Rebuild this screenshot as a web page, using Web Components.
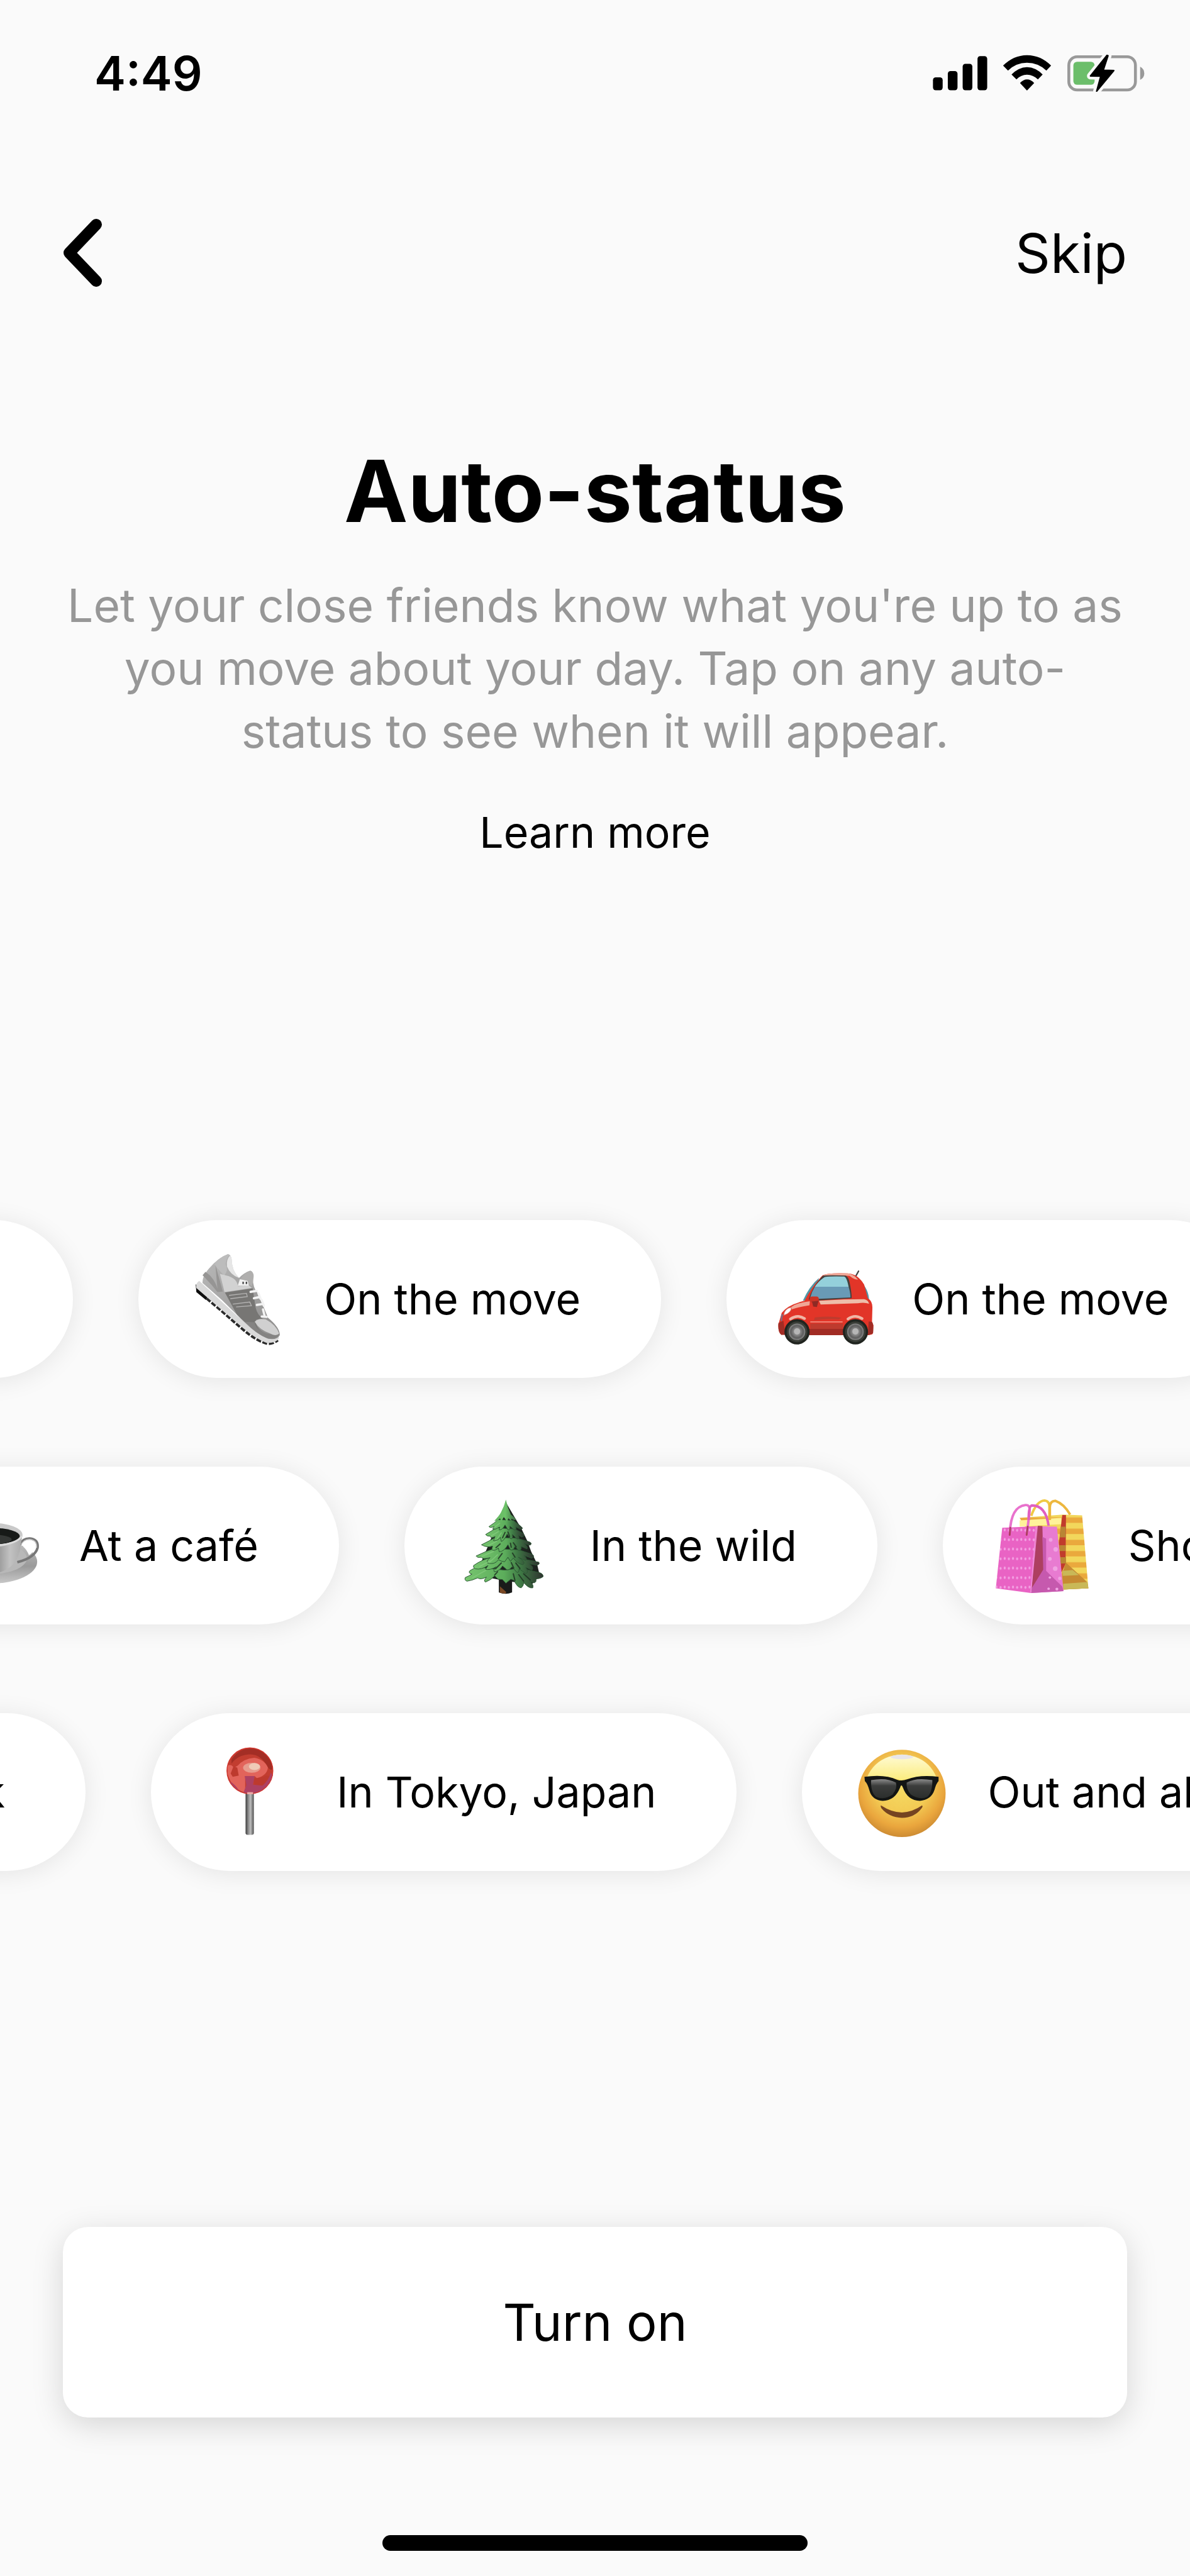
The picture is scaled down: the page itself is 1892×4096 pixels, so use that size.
<!DOCTYPE html>
<html lang="en">
<head>
<meta charset="utf-8">
<meta name="viewport" content="width=device-width, initial-scale=1">
<title>Auto-status</title>
<style>
  :root {
    --bg: #fafafa;
    --ink: #000;
    --muted: #979797;
    --side: 100px;
  }
  body {
    margin: 0;
    background: var(--bg);
    color: var(--ink);
    font-family: Inter, "Liberation Sans", sans-serif;
  }
</style>
</head>
<body>
<auto-status-screen>
  <phone-status-bar slot="status">4:49</phone-status-bar>
  <nav-bar slot="nav">Skip</nav-bar>
  <intro-text slot="intro">
    <span slot="title">Auto-status</span>
    Let your close friends know what you're up to as you move about your day. Tap on any auto-status to see when it will appear.
    <span slot="link">Learn more</span>
  </intro-text>
  <chip-row slot="rows" style="--scroll: -574px">
    <status-chip icon="cup">At home</status-chip>
    <status-chip icon="shoe">On the move</status-chip>
    <status-chip icon="car">On the move</status-chip>
  </chip-row>
  <chip-row slot="rows" style="--scroll: -169px">
    <status-chip icon="cup">At a café</status-chip>
    <status-chip icon="tree">In the wild</status-chip>
    <status-chip icon="bags">Shopping</status-chip>
  </chip-row>
  <chip-row slot="rows" style="--scroll: -533px">
    <status-chip icon="cup">At work</status-chip>
    <status-chip icon="pin">In Tokyo, Japan</status-chip>
    <status-chip icon="cool">Out and about</status-chip>
  </chip-row>
  <action-footer slot="footer">Turn on</action-footer>
</auto-status-screen>

<script>
// each icon is drawn in its own 480 unit square
const icons = {
  shoe: `
    <svg viewBox="64 108 480 480">
      <defs>
        <linearGradient id="heel" x1="0" y1="0" x2="1" y2="1">
          <stop offset="0" stop-color="#b9b9b9"/><stop offset="1" stop-color="#8c8b8a"/>
        </linearGradient>
      </defs>
      <path fill="none" stroke="#2a2a2a" stroke-width="18" stroke-dasharray="24 7" d="M112 302 Q150 342 205 386 L330 494 Q395 549 448 563 Q475 563 496 546"/>
      <path fill="#0d0d0d" d="M101 278 L104 316 L150 354 L160 338 Z"/>
      <path fill="#d9d9d9" d="M118 262 Q100 272 104 296 L205 384 L330 490 Q390 542 445 562 Q490 562 503 540 L500 515 L420 520 L300 430 Z"/>
      <path fill="url(#heel)" d="M256 133 Q210 150 165 202 Q132 240 134 272 L228 355 L330 455 Q395 520 450 541 Q492 550 507 524 Q508 488 450 440 L432 395 L398 318 Q374 290 378 240 Q380 216 364 213 Q335 222 310 248 Q274 212 274 155 Q270 134 256 133 Z"/>
      <path fill="#bcbcbc" d="M256 133 Q210 150 190 183 L238 236 Q262 212 245 180 Q250 150 265 137 Z"/>
      <path fill="#969594" d="M196 184 L232 314 L206 316 Q170 270 134 235 L148 218 Q190 246 206 300 Z"/>
      <path fill="#d2d2d2" d="M218 228 L250 236 Q300 248 305 288 L360 286 L372 296 L240 316 Z"/>
      <path fill="#777674" d="M242 318 L376 298 L390 390 Q400 432 430 448 L392 450 Q386 490 440 518 Q372 500 300 425 Z"/>
      <path fill="#848382" d="M386 462 Q390 500 448 518 L500 524 Q490 545 450 540 Q392 520 340 460 Z"/>
      <path fill="#d0d0d0" d="M386 460 Q400 440 440 448 Q490 475 504 516 Q488 532 460 516 Q410 500 386 460 Z"/>
      <path fill="#e6e6e6" d="M268 138 Q248 158 252 192 Q268 232 310 248 Q276 212 275 158 Z"/>
      <path fill="#b0afae" d="M364 213 Q335 222 318 254 L372 288 Q380 260 381 238 Q380 218 364 213 Z"/>
      <path fill="#f1f1f1" d="M314 254 L352 262 L358 286 L304 286 Z"/>
      <path stroke="#4b4b4b" stroke-width="7" d="M330 266 v11 M346 266 v11"/>
      <path fill="none" stroke="#b5b4b3" stroke-width="4" d="M262 332 L346 322 L350 338 L268 348 M280 374 L362 364 L370 382 L296 388"/>
      <path fill="none" stroke="#f3f3f3" stroke-width="11" stroke-linecap="round" d="M366 315 L396 310 M382 346 L410 340 M396 378 L424 374 M426 400 L434 432 M404 322 L414 348 M420 355 L430 382 M420 434 L444 436"/>
    </svg>`,
  car: `
    <svg viewBox="75 -12 480 480">
      <defs>
        <radialGradient id="hub"><stop offset="0" stop-color="#c9c9c9"/><stop offset=".35" stop-color="#8e8e8e"/><stop offset=".75" stop-color="#5d5d5d"/><stop offset="1" stop-color="#8a8a8a"/></radialGradient>
      </defs>
      <path stroke="#454545" stroke-width="7" stroke-linecap="round" d="M459 120 L473 95"/>
      <path fill="#4f97a8" d="M204 238 Q235 168 282 128 L250 230 Z M480 142 Q522 180 524 236 L500 220 Z"/>
      <path fill="#e23528" d="M86 352 L102 296 Q130 258 212 238 Q250 165 300 115 Q330 102 420 106 Q470 108 500 160 L518 226 Q540 240 540 270 L538 342 L545 356 L540 400 Q520 408 490 404 L100 402 Q84 390 86 352 Z"/>
      <path fill="#a12c24" d="M86 346 L110 334 L120 402 L100 403 Q82 390 86 346 Z M522 338 L538 340 Q548 352 543 396 L518 404 Z M236 374 H400 V404 H236 Z"/>
      <path fill="#be3b2e" d="M240 348 H398 V374 H240 Z M262 318 Q340 310 390 320 L378 328 Q320 325 258 332 Z"/>
      <path fill="#eebeaa" d="M282 238 L400 232 L500 230 Q520 234 524 252 Q500 244 470 250 L290 256 Z"/>
      <path fill="#f0a797" d="M148 268 Q180 246 238 240 L236 260 Q190 266 150 280 Z M300 114 Q330 102 420 106 Q452 110 470 136 Q450 136 430 118 Q380 112 312 120 Z"/>
      <path fill="none" stroke="#ee8c7e" stroke-width="6" d="M240 340 H396"/>
      <path fill="none" stroke="#f0b5a5" stroke-width="13" stroke-linecap="round" d="M144 326 Q178 302 212 324 M422 326 Q455 302 490 324"/>
      <path fill="#45403d" d="M300 118 Q310 113 410 116 Q424 120 430 150 Q440 200 440 226 L280 236 L232 232 Q250 170 300 118 Z"/>
      <path fill="#94d0db" d="M310 123 Q340 119 404 121 Q416 124 425 170 L262 170 Q280 142 310 123 Z"/>
      <path fill="#699ab6" d="M262 170 H425 Q434 200 434 222 L280 229 L240 222 Q246 196 262 170 Z"/>
      <rect x="237" y="217" width="44" height="30" rx="12" fill="#ca3426"/>
      <path fill="#8f2a24" d="M248 242 L280 238 L272 268 L254 266 Z"/>
      <path fill="#fff" stroke="#d2897e" stroke-width="3" d="M112 308 Q115 276 148 270 Q150 295 112 308 Z"/>
      <path fill="#77708a" d="M101 302 L108 305 L103 336 L96 336 Z"/>
      <circle cx="176" cy="388" r="61" fill="#20241f"/>
      <circle cx="176" cy="388" r="50" fill="#393d37"/>
      <circle cx="176" cy="388" r="40" fill="url(#hub)"/>
      <circle cx="176" cy="386" r="15" fill="#b6b6b6"/>
      <circle cx="458" cy="388" r="61" fill="#20241f"/>
      <circle cx="458" cy="388" r="50" fill="#393d37"/>
      <circle cx="458" cy="388" r="40" fill="url(#hub)"/>
      <circle cx="458" cy="386" r="15" fill="#b6b6b6"/>
    </svg>`,
  cup: `
    <svg viewBox="-273 42 480 480">
      <defs>
        <linearGradient id="china"><stop offset="0" stop-color="#eee"/><stop offset=".55" stop-color="#8c8c8c"/><stop offset=".8" stop-color="#c2c2c2"/><stop offset="1" stop-color="#aaa"/></linearGradient>
        <linearGradient id="plate" x1="0" y1="0" x2="0" y2="1"><stop offset="0" stop-color="#c4c4c4"/><stop offset=".6" stop-color="#9a9a9a"/><stop offset="1" stop-color="#c8c8c8"/></linearGradient>
      </defs>
      <ellipse cx="-40" cy="362" rx="220" ry="105" fill="url(#plate)"/>
      <ellipse cx="-40" cy="345" rx="170" ry="76" fill="#b8b8b8"/>
      <path fill="#fff" d="M112 288 Q118 258 150 258 Q176 264 170 294 Q160 318 140 330 Q132 306 112 288 Z"/>
      <path fill="none" stroke="#777" stroke-width="12" d="M96 280 Q112 246 150 250 Q186 256 182 294 Q170 342 84 364"/>
      <path fill="none" stroke="#ccc" stroke-width="4" d="M104 276 Q120 250 150 254 Q180 260 177 294"/>
      <path fill="url(#china)" d="M-190 240 Q-185 415 -40 420 Q70 410 96 310 L108 235 Z"/>
      <ellipse cx="-40" cy="232" rx="149" ry="58" fill="#c9c9c9"/>
      <ellipse cx="-40" cy="238" rx="136" ry="40" fill="#171a18"/>
      <ellipse cx="-45" cy="254" rx="102" ry="24" fill="#343735"/>
      <path fill="none" stroke="#dcdcdc" stroke-width="9" d="M-182 246 Q-120 288 -20 284 Q80 276 106 238"/>
    </svg>`,
  tree: `
    <svg viewBox="36 42 480 480">
      <defs>
        <linearGradient id="leaf"><stop offset="0" stop-color="#77c56f"/><stop offset=".5" stop-color="#5cad5b"/><stop offset=".72" stop-color="#3e7744"/><stop offset="1" stop-color="#2f3230"/></linearGradient>
        <linearGradient id="top"><stop offset="0" stop-color="#65b561"/><stop offset=".5" stop-color="#6cc268"/><stop offset="1" stop-color="#3c6743"/></linearGradient>
      </defs>
      <path fill="#1a1b1a" d="M252 440 H316 V510 Q285 524 252 510 Z"/>
      <path fill="#7b4925" d="M257 480 L288 508 L284 516 L257 512 Z"/>
      <path fill="#1c231e" d="M286 75 L246 165 L222 230 L196 295 L172 352 L140 412 L190 436 L260 450 L340 462 L412 470 L450 430 L436 370 L408 312 L390 262 L362 204 L330 150 Z"/>
      <g fill="url(#leaf)" stroke="#2c5734" stroke-width="3" stroke-linejoin="round">
        <path d="M112 405 Q150 378 196 394 L280 402 L360 392 L436 412 Q468 416 466 434 Q450 446 426 444 Q440 456 422 464 L402 456 Q422 474 416 488 Q396 492 372 462 Q372 480 360 488 Q340 486 326 452 L310 446 L286 466 L270 448 L248 446 L232 430 Q214 450 188 460 Q176 456 192 436 Q164 450 150 440 Q124 452 98 456 Q84 450 90 438 Q108 430 122 422 Q102 416 112 405 Z"/>
        <path d="M130 380 Q172 350 220 340 L350 344 L445 364 Q452 374 436 378 L400 372 Q424 390 412 402 L382 390 Q398 410 384 420 L350 396 Q350 418 338 412 L316 386 Q302 404 290 400 L270 382 Q254 408 230 410 Q224 400 240 386 Q208 404 188 398 L200 380 Q168 402 138 396 Q126 390 130 380 Z"/>
        <path d="M142 334 Q190 310 230 298 L350 304 L412 326 Q430 336 410 344 L374 332 Q394 350 380 356 L346 340 Q388 366 368 376 Q342 372 322 344 L308 360 L296 340 L280 362 Q262 360 250 352 Q232 378 198 368 Q190 358 210 342 Q172 352 168 340 Q148 344 142 334 Z"/>
        <path d="M168 280 Q208 260 236 244 L340 248 L400 266 Q416 274 402 282 L374 274 Q394 288 388 300 L360 288 Q364 306 348 308 L330 288 Q322 310 308 304 L296 280 Q278 312 254 314 L250 296 Q226 314 218 302 L222 286 Q196 296 168 280 Z"/>
        <path d="M188 230 Q220 210 244 198 L330 204 L370 226 Q380 238 362 242 L346 234 Q356 252 340 252 L318 230 Q322 256 308 250 L292 228 Q278 260 264 264 L260 244 Q242 264 226 260 L234 240 Q210 252 212 238 Q194 240 188 230 Z"/>
        <path d="M204 192 Q232 174 248 158 L322 162 L360 192 Q374 204 356 204 L334 194 Q340 210 326 208 L306 190 Q308 212 296 208 L282 184 Q268 210 254 208 L256 194 Q236 208 222 204 L230 192 Q210 200 204 192 Z"/>
      </g>
      <path fill="url(#top)" d="M286 62 Q294 100 310 134 Q324 144 336 158 Q326 164 312 154 L314 166 L298 152 L292 168 L276 146 L264 168 L258 152 Q244 166 230 164 Q252 142 262 124 Q278 96 286 62 Z"/>
      <g fill="none" stroke="#87cd80" stroke-width="5" stroke-linecap="round" opacity=".7">
        <path d="M214 238 L250 216 M200 284 L242 262 M170 336 L226 312 M160 384 L222 352 M126 438 L188 404 M206 366 L246 328 M244 252 L264 222 M230 196 L256 176"/>
      </g>
      <g fill="none" stroke="#1d2e21" stroke-width="6" stroke-linecap="round" opacity=".8">
        <path d="M270 246 L282 220 M304 240 L296 218 M238 294 L258 276 M312 292 L308 272 M336 290 L322 270 M250 346 L268 322 M330 340 L318 320 M236 396 L264 368 M324 392 L312 366 M354 394 L334 368 M232 426 L246 410 M330 452 L322 420 M372 456 L348 424 M404 450 L372 420"/>
      </g>
    </svg>`,
  bags: `
    <svg viewBox="63 72 480 480">
      <defs>
        <pattern id="stripes" width="60" height="54" patternUnits="userSpaceOnUse" y="150"><rect width="60" height="54" fill="#f2d75c"/><rect y="28" width="60" height="28" fill="#eaa93d"/></pattern>
        <pattern id="dots" width="40" height="46" patternUnits="userSpaceOnUse" x="112" y="216"><ellipse cx="10" cy="22" rx="5" ry="7" fill="#f3a0e2"/><ellipse cx="30" cy="24" rx="5" ry="7" fill="#f3a0e2"/></pattern>
      </defs>
      <path fill="url(#stripes)" d="M194 180 L404 164 L496 168 L526 520 L400 526 Z"/>
      <path fill="#fff39a" d="M194 192 L396 180 V210 L194 222 Z"/>
      <path fill="#c13b2c" d="M400 166 L418 166 L416 400 L396 446 L384 300 Z"/>
      <path fill="#b98534" d="M392 222 H416 V274 H388 Z M386 312 H416 V340 H388 Z M390 370 H418 V400 H392 Z"/>
      <path fill="#c68a32" d="M418 396 L520 490 L526 520 L402 526 L400 446 Z"/>
      <path fill="#c9b857" d="M402 436 L450 432 L480 456 L402 460 Z M404 498 L522 490 L526 520 L404 526 Z"/>
      <path fill="none" stroke="#f0c944" stroke-width="12" d="M250 170 Q276 98 314 96 Q340 98 338 134 V190"/>
      <path fill="none" stroke="#edb73e" stroke-width="12" d="M340 190 V128 Q342 96 368 98 Q408 112 438 164"/>
      <path fill="#e963c4" d="M110 228 L278 220 L248 543 L79 520 Z"/>
      <path fill="url(#dots)" d="M110 228 L278 220 L248 543 L79 520 Z"/>
      <path fill="#e87bd1" d="M278 220 L374 222 L406 534 L248 543 Z"/>
      <path fill="#ad3f61" d="M282 218 L304 219 L306 300 L314 432 L252 522 Z"/>
      <path fill="#c659ae" d="M304 272 L322 280 V436 L400 512 L406 534 L250 543 L252 520 L308 430 Z"/>
      <path fill="none" stroke="#f08ad9" stroke-width="5" d="M274 222 L248 540"/>
      <g fill="#f0a3e2"><circle cx="344" cy="286" r="9"/><circle cx="368" cy="332" r="11"/><circle cx="340" cy="378" r="9"/><circle cx="366" cy="425" r="11"/><circle cx="388" cy="472" r="8"/><circle cx="340" cy="468" r="6"/><circle cx="374" cy="524" r="7"/><circle cx="334" cy="522" r="6"/></g>
      <path fill="none" stroke="#e972cd" stroke-width="12" d="M147 250 Q152 126 222 118 Q246 116 242 150 L230 250"/>
      <path fill="none" stroke="#e05fc0" stroke-width="12" d="M238 190 Q236 122 254 120 Q320 120 334 218"/>
      <path stroke="#ad3f61" stroke-width="9" stroke-linecap="round" d="M149 228 L146 262 M233 222 L228 262"/>
    </svg>`,
  pin: `
    <svg viewBox="-39 36 480 480">
      <defs>
        <linearGradient id="rod"><stop offset="0" stop-color="#3c3c3c"/><stop offset=".3" stop-color="#858585"/><stop offset=".6" stop-color="#bdbdbd"/><stop offset="1" stop-color="#4e4e4e"/></linearGradient>
        <clipPath id="ball"><circle cx="199" cy="175" r="112"/></clipPath>
      </defs>
      <rect x="178" y="270" width="40" height="214" rx="10" fill="url(#rod)"/>
      <g clip-path="url(#ball)">
        <circle cx="199" cy="175" r="112" fill="#c23d30"/>
        <path fill="#a32e25" d="M110 120 Q150 60 220 66 Q300 80 312 160 Q304 180 286 158 Q250 90 190 96 Q140 100 110 140 Z"/>
        <path fill="#e2645b" d="M90 150 Q108 140 122 160 L140 150 Q170 116 220 112 Q270 120 286 160 Q280 200 232 210 L222 200 H176 V280 Q110 260 92 190 Z"/>
        <path fill="#bd3a2e" d="M120 152 L138 160 L145 198 L116 204 L106 188 Z M216 214 L262 206 Q290 190 298 210 L262 246 L222 242 Z"/>
        <path fill="#ad4163" d="M174 200 H222 L214 242 L260 246 Q290 220 300 184 L312 200 Q280 280 200 290 L168 280 L182 244 Z M96 222 Q130 240 150 276 L120 262 Z"/>
      </g>
      <circle cx="199" cy="175" r="111" fill="none" stroke="#d2372f" stroke-width="4"/>
      <ellipse cx="208" cy="160" rx="42" ry="24" fill="#e79c8e"/>
      <ellipse cx="221" cy="154" rx="27" ry="17" fill="#efcbb8"/>
      <rect x="186" y="278" width="28" height="10" fill="#eba9a5"/>
    </svg>`,
  cool: `
    <svg viewBox="30 36 480 480">
      <defs>
        <radialGradient id="skin" cx=".5" cy=".4" r=".62"><stop offset="0" stop-color="#f5dc65"/><stop offset=".5" stop-color="#f3cb54"/><stop offset=".78" stop-color="#eaa63d"/><stop offset="1" stop-color="#c88731"/></radialGradient>
        <linearGradient id="shine" x1="0" y1="0" x2="0" y2="1"><stop offset="0" stop-color="#fffbd6"/><stop offset="1" stop-color="#fbec7e"/></linearGradient>
        <linearGradient id="lens" x1="0" y1="0" x2="0" y2="1"><stop offset="0" stop-color="#8a8a8a"/><stop offset=".35" stop-color="#3c3d3c"/><stop offset="1" stop-color="#2b2e2c"/></linearGradient>
      </defs>
      <circle cx="273" cy="284" r="211" fill="url(#skin)"/>
      <path fill="url(#shine)" d="M104 206 Q150 102 273 96 Q396 102 440 206 Q350 200 273 220 Q200 200 104 206 Z"/>
      <ellipse cx="273" cy="108" rx="54" ry="11" fill="#e8e5e8"/>
      <path fill="#131514" d="M92 204 Q190 190 250 218 Q273 226 298 216 Q360 192 450 204 L450 224 Q438 236 430 268 Q414 316 360 320 Q300 318 278 256 Q270 234 264 256 Q240 318 180 320 Q128 316 116 270 Q108 238 94 224 Z"/>
      <path fill="url(#lens)" d="M124 220 Q200 206 244 232 Q252 258 228 290 Q186 318 148 300 Q122 280 124 220 Z M420 220 Q340 206 296 232 Q292 262 316 290 Q360 318 396 300 Q420 280 420 220 Z"/>
      <path fill="#754421" d="M172 342 Q224 376 273 376 Q324 374 370 342 Q376 346 368 356 Q334 402 273 402 Q210 400 174 356 Q168 344 172 342 Z"/>
    </svg>`
};

const screenTemplate = document.createElement('template');
screenTemplate.innerHTML = `
  <style>
    :host {
      display: flex;
      flex-direction: column;
      min-height: 100vh;
      overflow-x: clip;
    }
    main {
      flex: 1;
      display: flex;
      flex-direction: column;
    }
    .rows {
      flex: 1;
      display: flex;
      flex-direction: column;
      justify-content: center;
      gap: 141px;
    }
  </style>
  <slot name="status"></slot>
  <slot name="nav"></slot>
  <main>
    <slot name="intro"></slot>
    <div class="rows"><slot name="rows"></slot></div>
  </main>
  <slot name="footer"></slot>
`;

class AutoStatusScreen extends HTMLElement {
  constructor() {
    super();
    this.attachShadow({ mode: 'open' });
    this.shadowRoot.appendChild(screenTemplate.content.cloneNode(true));
  }
}

const statusBarTemplate = document.createElement('template');
statusBarTemplate.innerHTML = `
  <style>
    :host {
      display: flex;
      justify-content: space-between;
      align-items: center;
      height: 232px;
      padding: 0 72px 0 150px;
      font-size: 75px;
      font-weight: 600;
    }
    svg { display: block; width: 337px; height: 59px; }
  </style>
  <span><slot></slot></span>
  <svg viewBox="135 83 1026 180" role="img" aria-label="Signal, Wi-Fi, charging">
    <rect x="135" y="193" width="47" height="62" rx="13"/>
    <rect x="207" y="162" width="47" height="93" rx="13"/>
    <rect x="279" y="127" width="47" height="128" rx="13"/>
    <rect x="351" y="90" width="47" height="165" rx="13"/>
    <path d="M475 136 Q524 86 591 85 Q660 86 708 136 L685 160 Q645 122 591 122 Q538 122 499 160 Z"/>
    <path d="M516 179 Q550 144 591 143 Q634 144 667 179 L644 203 Q620 180 591 180 Q562 180 540 203 Z"/>
    <path d="M557 220 Q574 203 591 203 Q610 203 626 220 L591 257 Z"/>
    <rect x="794" y="93" width="323" height="161" rx="40" fill="none" stroke="#999" stroke-width="14"/>
    <path fill="#999" d="M1140 141 Q1160 152 1160 174 Q1160 196 1140 205 Z"/>
    <rect x="816" y="117" width="103" height="112" rx="18" fill="#6cbe6b"/>
    <path fill="#000" stroke="#fafafa" stroke-width="34" stroke-linejoin="round" d="M979 86 L899 186 L949 187 L929 260 L1012 160 L961 158 L984 88 Z"/>
    <path fill="#000" stroke="#000" stroke-width="7" stroke-linejoin="round" d="M979 86 L899 186 L949 187 L929 260 L1012 160 L961 158 L984 88 Z"/>
  </svg>
`;

class PhoneStatusBar extends HTMLElement {
  constructor() {
    super();
    this.attachShadow({ mode: 'open' });
    this.shadowRoot.appendChild(statusBarTemplate.content.cloneNode(true));
  }
}

const navTemplate = document.createElement('template');
navTemplate.innerHTML = `
  <style>
    :host {
      display: flex;
      justify-content: space-between;
      align-items: center;
      height: 180px;
      margin-top: 80px;
      padding: 0 var(--side);
    }
    button {
      padding: 0;
      border: 0;
      background: none;
      color: inherit;
      font: inherit;
      font-size: 87px;
      cursor: pointer;
    }
    svg { display: block; width: 62px; height: 108px; }
  </style>
  <button type="button" aria-label="Back">
    <svg viewBox="0 0 62 108"><path d="M53 9 L10 54 L53 99" fill="none" stroke="#000" stroke-width="18" stroke-linecap="round" stroke-linejoin="round"/></svg>
  </button>
  <button type="button"><slot></slot></button>
`;

class NavBar extends HTMLElement {
  constructor() {
    super();
    this.attachShadow({ mode: 'open' });
    this.shadowRoot.appendChild(navTemplate.content.cloneNode(true));
  }
}

const introTemplate = document.createElement('template');
introTemplate.innerHTML = `
  <style>
    :host {
      display: block;
      margin-top: 205px;
      padding: 0 var(--side);
      text-align: center;
    }
    h1 {
      margin: 0 0 48px;
      font-size: 136px;
      font-weight: 700;
      line-height: 168px;
    }
    p {
      margin: 0 0 60px;
      color: var(--muted);
      font-size: 73px;
      line-height: 100px;
    }
    a {
      color: inherit;
      font-size: 68px;
      line-height: 100px;
      text-decoration: none;
      display: block;
    }
  </style>
  <h1><slot name="title"></slot></h1>
  <p><slot></slot></p>
  <a href="#learn-more"><slot name="link"></slot></a>
`;

class IntroText extends HTMLElement {
  constructor() {
    super();
    this.attachShadow({ mode: 'open' });
    this.shadowRoot.appendChild(introTemplate.content.cloneNode(true));
  }
}

const rowTemplate = document.createElement('template');
rowTemplate.innerHTML = `
  <style>
    :host {
      display: flex;
      gap: 104px;
      margin-left: var(--scroll, 0);
    }
  </style>
  <slot></slot>
`;

// --scroll is how far the row has drifted to the left
class ChipRow extends HTMLElement {
  constructor() {
    super();
    this.attachShadow({ mode: 'open' });
    this.shadowRoot.appendChild(rowTemplate.content.cloneNode(true));
  }
}

const chipTemplate = document.createElement('template');
chipTemplate.innerHTML = `
  <style>
    :host {
      display: block;
      flex: none;
    }
    button {
      display: flex;
      align-items: center;
      gap: 58px;
      height: 251px;
      padding: 0 128px 0 79px;
      border: 0;
      border-radius: 126px;
      background: #fff;
      box-shadow: 0 4px 40px rgba(0, 0, 0, 0.09);
      color: inherit;
      font: inherit;
      font-size: 68px;
      white-space: nowrap;
      cursor: pointer;
    }
    .icon svg { display: block; width: 158px; height: 158px; }
  </style>
  <button type="button">
    <span class="icon" aria-hidden="true"></span>
    <slot></slot>
  </button>
`;

class StatusChip extends HTMLElement {
  constructor() {
    super();
    this.attachShadow({ mode: 'open' });
    this.shadowRoot.appendChild(chipTemplate.content.cloneNode(true));
  }

  connectedCallback() {
    this.shadowRoot.querySelector('.icon').innerHTML = icons[this.getAttribute('icon')] || '';
  }
}

const footerTemplate = document.createElement('template');
footerTemplate.innerHTML = `
  <style>
    :host {
      display: flex;
      flex-direction: column;
      align-items: center;
      gap: 187px;
      padding: 0 var(--side) 40px;
    }
    button {
      width: 100%;
      height: 303px;
      border: 0;
      border-radius: 40px;
      background: #fff;
      box-shadow: 0 12px 50px rgba(0, 0, 0, 0.15);
      color: inherit;
      font: inherit;
      font-size: 81px;
      cursor: pointer;
    }
    .home {
      width: 40%;
      height: 25px;
      border-radius: 13px;
      background: #000;
    }
  </style>
  <button type="button"><slot></slot></button>
  <div class="home"></div>
`;

class ActionFooter extends HTMLElement {
  constructor() {
    super();
    this.attachShadow({ mode: 'open' });
    this.shadowRoot.appendChild(footerTemplate.content.cloneNode(true));
  }
}

customElements.define('auto-status-screen', AutoStatusScreen);
customElements.define('phone-status-bar', PhoneStatusBar);
customElements.define('nav-bar', NavBar);
customElements.define('intro-text', IntroText);
customElements.define('chip-row', ChipRow);
customElements.define('status-chip', StatusChip);
customElements.define('action-footer', ActionFooter);
</script>
</body>
</html>
